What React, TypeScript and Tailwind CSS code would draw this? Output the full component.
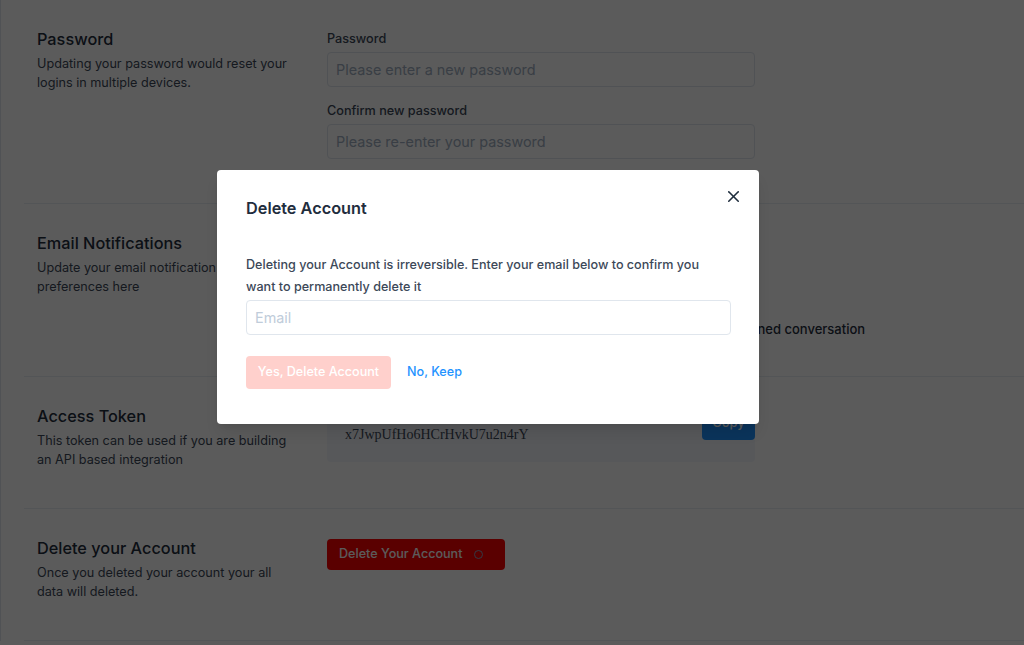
import { X } from "lucide-react";

const font = { fontFamily: "Inter, 'Noto Sans', sans-serif" };

function Section({ title, desc, h, children }: { title: string; desc: string[]; h: string; children?: React.ReactNode }) {
  return (
    <div className={`flex border-b border-[#e8edf3] pl-[13px] pt-[25px] ${h}`}>
      <div className="w-[290px] shrink-0">
        <p className="text-[16.3px] leading-[28px] font-medium text-[#1f2d3d]">{title}</p>
        <div className="mt-[2px]">
          {desc.map((d) => (
            <p key={d} className="text-[12.65px] leading-[18.5px] text-[#3c4858]">
              {d}
            </p>
          ))}
        </div>
      </div>
      <div className="w-[428px]">{children}</div>
    </div>
  );
}

function Field({ label, placeholder }: { label: string; placeholder: string }) {
  return (
    <div className="mb-[11px]">
      <p className="text-[12.65px] leading-[26px] font-medium text-[#3c4858]">{label}</p>
      <div className="flex h-[35px] items-center rounded-[4px] border border-[#e0e6ed] px-[8px] text-[14.4px] text-[#a0aec0]">
        {placeholder}
      </div>
    </div>
  );
}

export default function App() {
  const options = [
    "Send email notifications when a conversation is created",
    "Send email notifications when a conversation is assigned to you",
    "Send email notifications when a new message is created in an assigned conversation",
  ];
  return (
    <div className="relative h-[645px] w-[1024px] overflow-hidden bg-white" style={font}>
      <div className="border-l border-[#e0e6ed] pl-[23px]">
        <Section title="Password" desc={["Updating your password would reset your", "logins in multiple devices."]} h="h-[204px]">
          <div className="mt-[1px]">
            <Field label="Password" placeholder="Please enter a new password" />
            <Field label="Confirm new password" placeholder="Please re-enter your password" />
          </div>
        </Section>
        <Section title="Email Notifications" desc={["Update your email notification", "preferences here"]} h="h-[173px]">
          <div className="mt-[18px] flex flex-col gap-[16px]">
            {options.map((o) => (
              <label key={o} className="flex items-center gap-[8px] whitespace-nowrap text-[13px] leading-[20px] font-medium text-[#1f2d3d]">
                <span className="h-[14px] w-[14px] rounded-[2px] border border-[#8492a6]" />
                {o}
              </label>
            ))}
          </div>
        </Section>
        <Section title="Access Token" desc={["This token can be used if you are building", "an API based integration"]} h="h-[132px]">
          <div className="flex h-[60px] items-center justify-between rounded-[4px] bg-[#f4f6fb] pl-[18px] pr-0">
            <span className="mt-[4px] text-[14px] text-[#3c4858]" style={{ fontFamily: "'Liberation Serif', serif" }}>
              x7JwpUfHo6HCrHvkU7u2n4rY
            </span>
            <button className="-mt-[18px] h-[34px] w-[53px] rounded-[4px] bg-[#1f93ff] text-[13px] font-medium text-white">Copy</button>
          </div>
        </Section>
        <Section title="Delete your Account" desc={["Once you deleted your account your all", "data will deleted."]} h="h-[132px]">
          <button className="mt-[5px] flex h-[31px] w-[178px] items-center gap-[12px] rounded-[4px] bg-[#fc0000] pl-[12px] text-[12.6px] font-medium text-white">
            Delete Your Account
            <span className="h-[9px] w-[9px] rounded-full border-[1.5px] border-[#8fa3c0]" />
          </button>
        </Section>
      </div>

      <div className="absolute inset-0 bg-black/[0.643] pl-[217px] pt-[170px]">
        <div className="relative h-[254px] w-[542px] rounded-[4px] bg-white px-[29px] pt-[29px] shadow-lg">
          <X className="absolute right-[16px] top-[17px] h-[19px] w-[19px] text-[#1f2d3d]" strokeWidth={2} />
          <p className="text-[16.3px] leading-[18px] font-semibold text-[#1f2d3d]">Delete Account</p>
          <p className="mt-[37px] text-[12.6px] leading-[22px] font-medium text-[#3c4858]">
            Deleting your Account is irreversible. Enter your email below to confirm you want to permanently delete it
          </p>
          <div className="mt-[2px] flex h-[35px] w-[485px] items-center rounded-[4px] border border-[#e0e6ed] px-[8px] text-[14.4px] text-[#c0ccda]">
            Email
          </div>
          <div className="mt-[21px] flex items-center gap-[16px]">
            <button className="h-[33px] w-[145px] rounded-[4px] bg-[#ffd0cc] text-[12.6px] font-medium text-white">Yes, Delete Account</button>
            <button className="text-[12.6px] font-medium text-[#1f93ff]">No, Keep</button>
          </div>
        </div>
      </div>
    </div>
  );
}
